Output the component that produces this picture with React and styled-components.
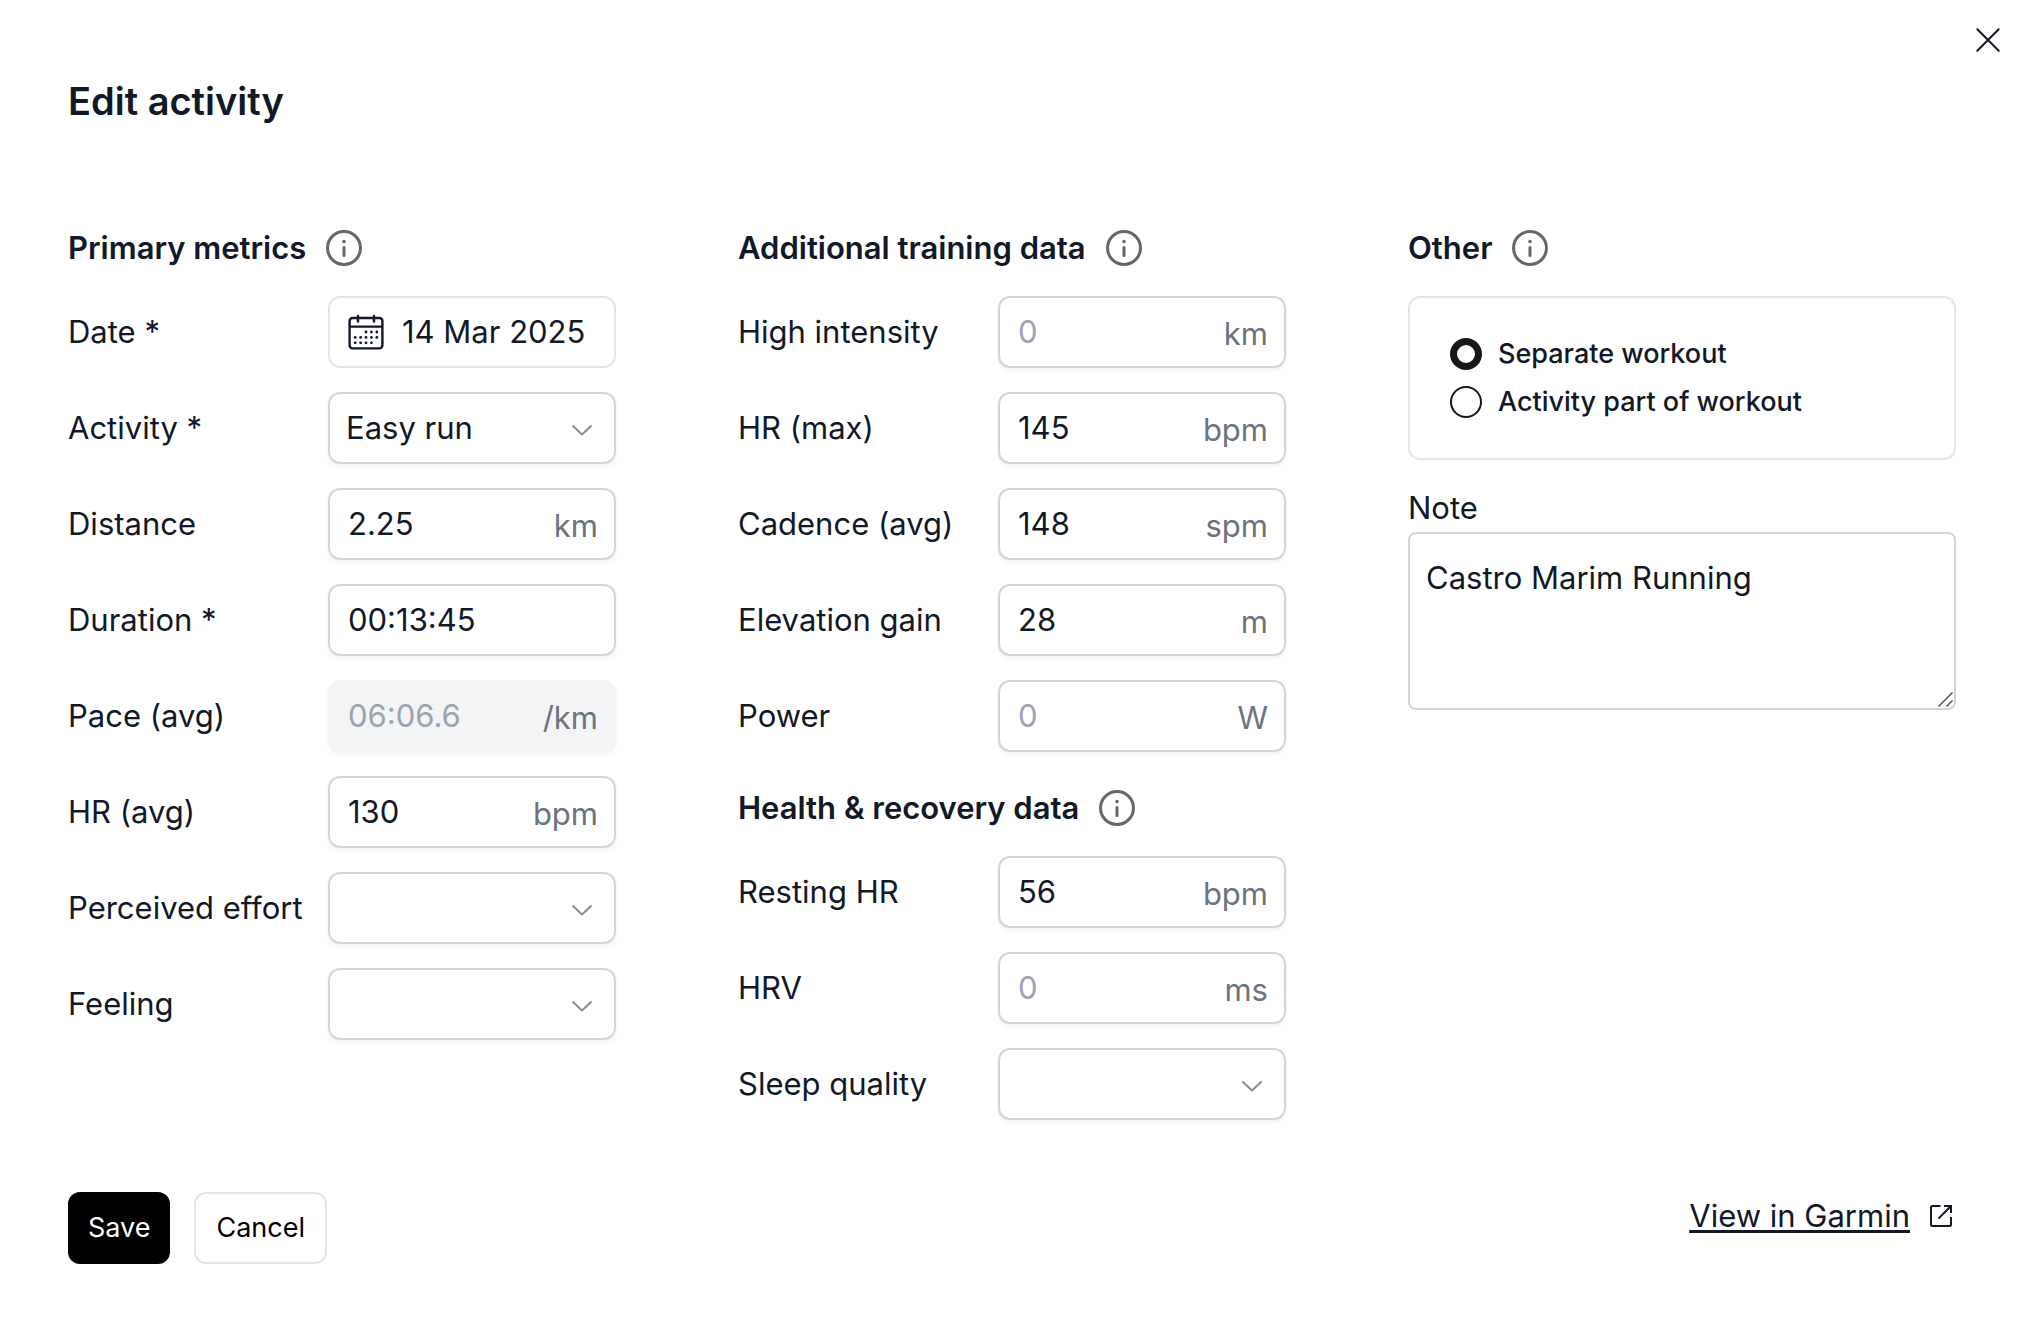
import React, { useState } from "react";
import styled, { createGlobalStyle, css } from "styled-components";

const GlobalStyle = createGlobalStyle`
  *, *::before, *::after { box-sizing: border-box; }
  body {
    margin: 0;
    background: #fff;
    color: #111827;
    font-family: Inter, "Liberation Sans", sans-serif;
    font-size: 31px;
    line-height: 48px;
  }
  button, input, select, textarea { font: inherit; color: inherit; }
`;

const Dialog = styled.form`
  display: flex;
  flex-direction: column;
  padding-bottom: 54px;
`;

const TopBar = styled.div`
  display: flex;
  justify-content: flex-end;
  padding: 20px 22px 0;
`;

const CloseButton = styled.button`
  display: grid;
  place-items: center;
  width: 40px;
  height: 40px;
  padding: 0;
  border: 0;
  background: none;
  cursor: pointer;
`;

const Content = styled.div`
  padding: 16px 74px 0 68px;
`;

const Title = styled.h1`
  margin: 0 0 98px;
  font-size: 38px;
  line-height: 50px;
  font-weight: 600;
`;

const Columns = styled.div`
  display: grid;
  grid-template-columns: repeat(3, minmax(0, 1fr));
  gap: 122px;
  align-items: start;
`;

const Column = styled.div`
  display: flex;
  flex-direction: column;
  gap: 32px;
`;

const Section = styled.section`
  display: flex;
  flex-direction: column;
  gap: 24px;
`;

const SectionHeader = styled.div`
  display: flex;
  align-items: center;
  gap: 20px;
`;

const SectionTitle = styled.h2`
  margin: 0;
  font-size: inherit;
  font-weight: 600;
`;

const InfoButton = styled.button`
  display: flex;
  padding: 0;
  border: 0;
  background: none;
  color: #666;
`;

const Row = styled.div`
  display: grid;
  grid-template-columns: 260px minmax(0, 1fr);
  align-items: center;
`;

const frame = css`
  height: 72px;
  border: 2px solid #d1d5db;
  border-radius: 12px;
  background: #fff;
  box-shadow: 0 2px 4px rgba(0, 0, 0, 0.05);
`;

const InputFrame = styled.div`
  ${frame}
  display: flex;
  align-items: center;
  padding: 0 16px 0 18px;
  ${(p) => p.$disabled && css`
    background: #f3f4f6;
    border-color: #f3f4f6;
  `}
`;

const TextInput = styled.input`
  flex: 1;
  min-width: 0;
  width: 100%;
  height: 48px;
  padding: 0;
  border: 0;
  outline: 0;
  background: none;
  &::placeholder { color: #9ca3af; opacity: 1; }
  &:disabled { color: #9ca3af; }
`;

const Unit = styled.span`
  padding-top: 4px;
  color: #6b7280;
`;

const SelectFrame = styled.div`
  display: grid;
  align-items: center;
  & > * { grid-area: 1 / 1; }
  & > svg {
    justify-self: end;
    margin-right: 20px;
    pointer-events: none;
  }
`;

const Select = styled.select`
  ${frame}
  appearance: none;
  width: 100%;
  padding: 0 56px 0 16px;
`;

const DateButton = styled.button`
  ${frame}
  display: flex;
  align-items: center;
  gap: 18px;
  width: 100%;
  padding: 0 18px;
  border-color: #e5e5e5;
  box-shadow: none;
  white-space: nowrap;
`;

const RadioBox = styled.fieldset`
  display: flex;
  flex-direction: column;
  gap: 16px;
  margin: 0;
  padding: 40px;
  border: 2px solid #e5e5e5;
  border-radius: 12px;
`;

const RadioLabel = styled.label`
  display: flex;
  align-items: center;
  gap: 16px;
  font-size: 27px;
  line-height: 32px;
  font-weight: 500;
`;

const Radio = styled.input`
  appearance: none;
  flex: none;
  width: 32px;
  height: 32px;
  margin: 0;
  border: 2px solid #171717;
  border-radius: 50%;
  background: #fff;
  &:checked { border-width: 7px; }
`;

const NoteField = styled.div`
  display: flex;
  flex-direction: column;
`;

const NoteBox = styled.div`
  display: grid;
  & > * { grid-area: 1 / 1; }
  & > svg {
    place-self: end;
    margin: 2px;
    pointer-events: none;
  }
`;

const NoteInput = styled.textarea`
  ${frame}
  width: 100%;
  height: 178px;
  padding: 20px 16px;
  border-radius: 8px;
  box-shadow: none;
  outline: 0;
  resize: vertical;
  &::-webkit-resizer { display: none; }
`;

const Footer = styled.footer`
  display: flex;
  align-items: flex-start;
  gap: 24px;
  margin-top: 72px;
`;

const Button = styled.button`
  height: 72px;
  padding: 0 ${(p) => (p.$primary ? 18 : 20)}px;
  border: 2px solid ${(p) => (p.$primary ? "#000" : "#e5e5e5")};
  border-radius: 12px;
  background: ${(p) => (p.$primary ? "#000" : "#fff")};
  color: ${(p) => (p.$primary ? "#fff" : "#000")};
  font-size: 27px;
`;

const ExternalLink = styled.a`
  display: flex;
  align-items: center;
  gap: 18px;
  margin-left: auto;
  color: inherit;
  text-decoration: none;
`;

const LinkText = styled.span`
  text-decoration: underline;
  text-decoration-thickness: 3px;
  text-underline-offset: 3px;
  text-decoration-skip-ink: none;
`;

const CloseIcon = () => (
  <svg width="24" height="24" viewBox="0 0 24 24" fill="none" stroke="currentColor" strokeWidth="2" strokeLinecap="round" aria-hidden="true">
    <path d="M1.3 1.3 22.7 22.7M22.7 1.3 1.3 22.7" />
  </svg>
);

const InfoIcon = () => (
  <svg width="36" height="36" viewBox="0 0 36 36" fill="none" stroke="currentColor" aria-hidden="true">
    <circle cx="18" cy="18" r="16.5" strokeWidth="3" />
    <path d="M18 17.5v8" strokeWidth="3" strokeLinecap="round" />
    <circle cx="18" cy="11.5" r="1.8" fill="currentColor" stroke="none" />
  </svg>
);

const ChevronIcon = () => (
  <svg width="26" height="26" viewBox="0 0 26 26" fill="none" stroke="#868b94" strokeWidth="2" strokeLinecap="round" strokeLinejoin="round" aria-hidden="true">
    <path d="m3 11 9 8.500 9-8.500" />
  </svg>
);

const DAY_ROWS = [
  [18, [18, 23.4, 28.8]],
  [23.4, [7.2, 12.6, 18, 23.4, 28.8]],
  [28.8, [7.2, 12.6, 18, 23.4]],
];

const CalendarIcon = () => (
  <svg width="36" height="36" viewBox="0 0 36 36" fill="none" stroke="currentColor" strokeWidth="2.4" aria-hidden="true">
    <rect x="1.6" y="4" width="32.8" height="30.4" rx="3" />
    <path d="M1.6 12.6h32.8" />
    <path d="M10 2v5.6M26 2v5.6" strokeLinecap="round" />
    {DAY_ROWS.map(([y, xs]) =>
      xs.map((x) => <circle key={`${x}-${y}`} cx={x} cy={y} r="1.4" fill="currentColor" stroke="none" />)
    )}
  </svg>
);

const ExternalIcon = () => (
  <svg width="28" height="28" viewBox="0 0 28 28" fill="none" stroke="currentColor" strokeWidth="2" aria-hidden="true">
    <path d="M12.500 4H4.500Q3 4 3 5.500V22.500Q3 24 4.500 24H21.500Q23 24 23 22.500V15" />
    <path d="M16 4h7v7M23 4 10.500 16.500" />
  </svg>
);

const ResizeGrip = () => (
  <svg width="16" height="16" viewBox="0 0 16 16" stroke="#555" strokeWidth="1.5" aria-hidden="true">
    <path d="M.5 14.500 14.500.5M8.500 14.500l6-6" />
  </svg>
);

function SectionHeading({ children }) {
  return (
    <SectionHeader>
      <SectionTitle>{children}</SectionTitle>
      <InfoButton type="button" aria-label={`About ${children}`}>
        <InfoIcon />
      </InfoButton>
    </SectionHeader>
  );
}

function Field({ id, label, unit, value, placeholder, disabled }) {
  return (
    <Row>
      <label htmlFor={id}>{label}</label>
      <InputFrame $disabled={disabled}>
        <TextInput id={id} defaultValue={value} placeholder={placeholder} disabled={disabled} />
        {unit && <Unit>{unit}</Unit>}
      </InputFrame>
    </Row>
  );
}

function SelectField({ id, label, options }) {
  return (
    <Row>
      <label htmlFor={id}>{label}</label>
      <SelectFrame>
        <Select id={id}>
          {options.map((o) => (
            <option key={o}>{o}</option>
          ))}
        </Select>
        <ChevronIcon />
      </SelectFrame>
    </Row>
  );
}

export default function App() {
  const [kind, setKind] = useState("separate");
  return (
    <>
      <GlobalStyle />
      <Dialog onSubmit={(e) => e.preventDefault()}>
        <TopBar>
          <CloseButton type="button" aria-label="Close">
            <CloseIcon />
          </CloseButton>
        </TopBar>
        <Content>
          <Title>Edit activity</Title>
          <Columns>
            <Column>
              <Section>
                <SectionHeading>Primary metrics</SectionHeading>
                <Row>
                  <label htmlFor="date">Date *</label>
                  <DateButton id="date" type="button">
                    <CalendarIcon />
                    14 Mar 2025
                  </DateButton>
                </Row>
                <SelectField id="activity" label="Activity *" options={["Easy run"]} />
                <Field id="distance" label="Distance" value="2.25" unit="km" />
                <Field id="duration" label="Duration *" value="00:13:45" />
                <Field id="pace" label="Pace (avg)" value="06:06.6" unit="/km" disabled />
                <Field id="hr-avg" label="HR (avg)" value="130" unit="bpm" />
                <SelectField id="effort" label="Perceived effort" options={[""]} />
                <SelectField id="feeling" label="Feeling" options={[""]} />
              </Section>
            </Column>

            <Column>
              <Section>
                <SectionHeading>Additional training data</SectionHeading>
                <Field id="intensity" label="High intensity" placeholder="0" unit="km" />
                <Field id="hr-max" label="HR (max)" value="145" unit="bpm" />
                <Field id="cadence" label="Cadence (avg)" value="148" unit="spm" />
                <Field id="elevation" label="Elevation gain" value="28" unit="m" />
                <Field id="power" label="Power" placeholder="0" unit="W" />
              </Section>
              <Section>
                <SectionHeading>Health &amp; recovery data</SectionHeading>
                <Field id="resting" label="Resting HR" value="56" unit="bpm" />
                <Field id="hrv" label="HRV" placeholder="0" unit="ms" />
                <SelectField id="sleep" label="Sleep quality" options={[""]} />
              </Section>
            </Column>

            <Column>
              <Section>
                <SectionHeading>Other</SectionHeading>
                <RadioBox aria-label="Workout grouping">
                  <RadioLabel>
                    <Radio type="radio" name="kind" checked={kind === "separate"} onChange={() => setKind("separate")} />
                    Separate workout
                  </RadioLabel>
                  <RadioLabel>
                    <Radio type="radio" name="kind" checked={kind === "part"} onChange={() => setKind("part")} />
                    Activity part of workout
                  </RadioLabel>
                </RadioBox>
                <NoteField>
                  <label htmlFor="note">Note</label>
                  <NoteBox>
                    <NoteInput id="note" defaultValue="Castro Marim Running" />
                    <ResizeGrip />
                  </NoteBox>
                </NoteField>
              </Section>
            </Column>
          </Columns>
          <Footer>
            <Button type="submit" $primary>Save</Button>
            <Button type="button">Cancel</Button>
            <ExternalLink href="#garmin">
              <LinkText>View in Garmin</LinkText>
              <ExternalIcon />
            </ExternalLink>
          </Footer>
        </Content>
      </Dialog>
    </>
  );
}
